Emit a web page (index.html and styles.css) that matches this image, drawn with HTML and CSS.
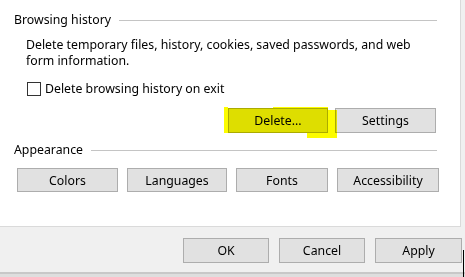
FILE: index.html
```html
<!DOCTYPE html>
<html lang="en">
<head>
    <meta charset="UTF-8">
    <meta name="viewport" content="width=device-width, initial-scale=1.0">
    <title>Internet Options - General</title>
    <link rel="stylesheet" href="styles.css">
</head>
<body>
    <div class="panel">
        <div class="group-title">
            <span>Browsing history</span>
            <span class="rule"></span>
        </div>
        <div class="group-body">
            <p class="desc">Delete temporary files, history, cookies, saved passwords, and web<br>form information.</p>
            <label class="check-row"><span class="checkbox"></span>Delete browsing history on exit</label>
            <div class="button-row">
                <div class="marked">
                    <button class="btn btn-delete">Delete...</button>
                    <span class="hl hl-left"></span>
                    <span class="hl hl-top"></span>
                    <span class="hl hl-body"></span>
                    <span class="hl hl-right"></span>
                    <span class="hl hl-tail"></span>
                </div>
                <button class="btn btn-settings">Settings</button>
            </div>
        </div>

        <div class="group-title appearance">
            <span>Appearance</span>
            <span class="rule"></span>
        </div>
        <div class="appearance-row">
            <button class="btn btn-colors">Colors</button>
            <button class="btn btn-languages">Languages</button>
            <button class="btn btn-fonts">Fonts</button>
            <button class="btn btn-access">Accessibility</button>
        </div>
    </div>

    <div class="footer">
        <button class="btn btn-footer">OK</button>
        <button class="btn btn-footer">Cancel</button>
        <button class="btn btn-footer btn-apply">Apply</button>
        <span class="cursor-line"></span>
    </div>
    <div class="bottom-edge"></div>
</body>
</html>
```

FILE: styles.css
```css
html, body {
    margin: 0;
    padding: 0;
}
body {
    font-family: "Noto Sans", "Open Sans", sans-serif;
    font-size: 12.3px;
    line-height: 16px;
    color: #000;
    background-color: #f0f0f0;
    width: 465px;
    height: 277px;
    overflow: hidden;
}
.panel {
    background: #fff;
    width: 446px;
    height: 214px;
    padding: 12px 0 0 14px;
    border-right: 1px solid #dadada;
    border-bottom: 1px solid #dadada;
}
.group-title {
    display: flex;
    align-items: center;
    gap: 8px;
    width: 423px;
}
.group-title .rule {
    flex: 1;
    height: 1px;
    background: #c4c4c4;
    margin-top: 1px;
}
.group-body {
    padding-left: 12px;
    width: 411px;
}
.desc {
    margin: 9px 0 0 0;
}
.check-row {
    display: flex;
    align-items: center;
    gap: 4px;
    margin-top: 12px;
    margin-left: 1px;
    height: 16px;
}
.checkbox {
    width: 12px;
    height: 12px;
    border: 1px solid #333;
    background: #fff;
}
.button-row {
    display: flex;
    justify-content: flex-end;
    gap: 7px;
    margin-top: 11px;
    padding-right: 1px;
}
.btn {
    font-family: "Noto Sans", "Open Sans", sans-serif;
    font-size: 12.3px;
    color: #000;
    background: #e1e1e1;
    border: 1px solid #adadad;
    height: 25px;
    padding: 0;
    box-sizing: border-box;
    border-radius: 0;
}
.btn-delete { width: 100px; }
.btn-settings { width: 101px; }
.appearance {
    margin-top: 9px;
}
.appearance-row {
    display: flex;
    gap: 9px;
    margin-top: 10px;
    padding-left: 3px;
}
.appearance-row .btn { height: 24px; }
.btn-colors { width: 101px; }
.btn-languages { width: 100px; }
.btn-fonts { width: 92px; }
.btn-access { width: 102px; }

/* yellow highlighter stroke over the Delete button */
.marked {
    position: relative;
    display: flex;
}
.hl {
    position: absolute;
    background: rgb(252, 252, 0);
    mix-blend-mode: multiply;
}
.hl-body { left: 0; top: 0; width: 100px; height: 25px; }
.hl-left { left: -4px; top: -1px; width: 4px; height: 26px; }
.hl-top { left: 45px; top: -1px; width: 55px; height: 1px; }
.hl-right { left: 100px; top: 2px; width: 9px; height: 28px; }
.hl-tail { left: 79px; top: 25px; width: 21px; height: 5px; }

.footer {
    position: relative;
    height: 45px;
    display: flex;
    justify-content: flex-end;
    align-items: flex-start;
    gap: 10px;
    padding-right: 3px;
    border-bottom: 2px solid #c8c8c8;
}
.btn-footer {
    width: 86px;
    margin-top: 11px;
}
.btn-apply { width: 87px; }
.cursor-line {
    position: absolute;
    right: 1px;
    top: 23px;
    width: 1px;
    height: 40px;
    background: #000;
}
.bottom-edge {
    height: 10px;
    background: #dedede;
}
```
